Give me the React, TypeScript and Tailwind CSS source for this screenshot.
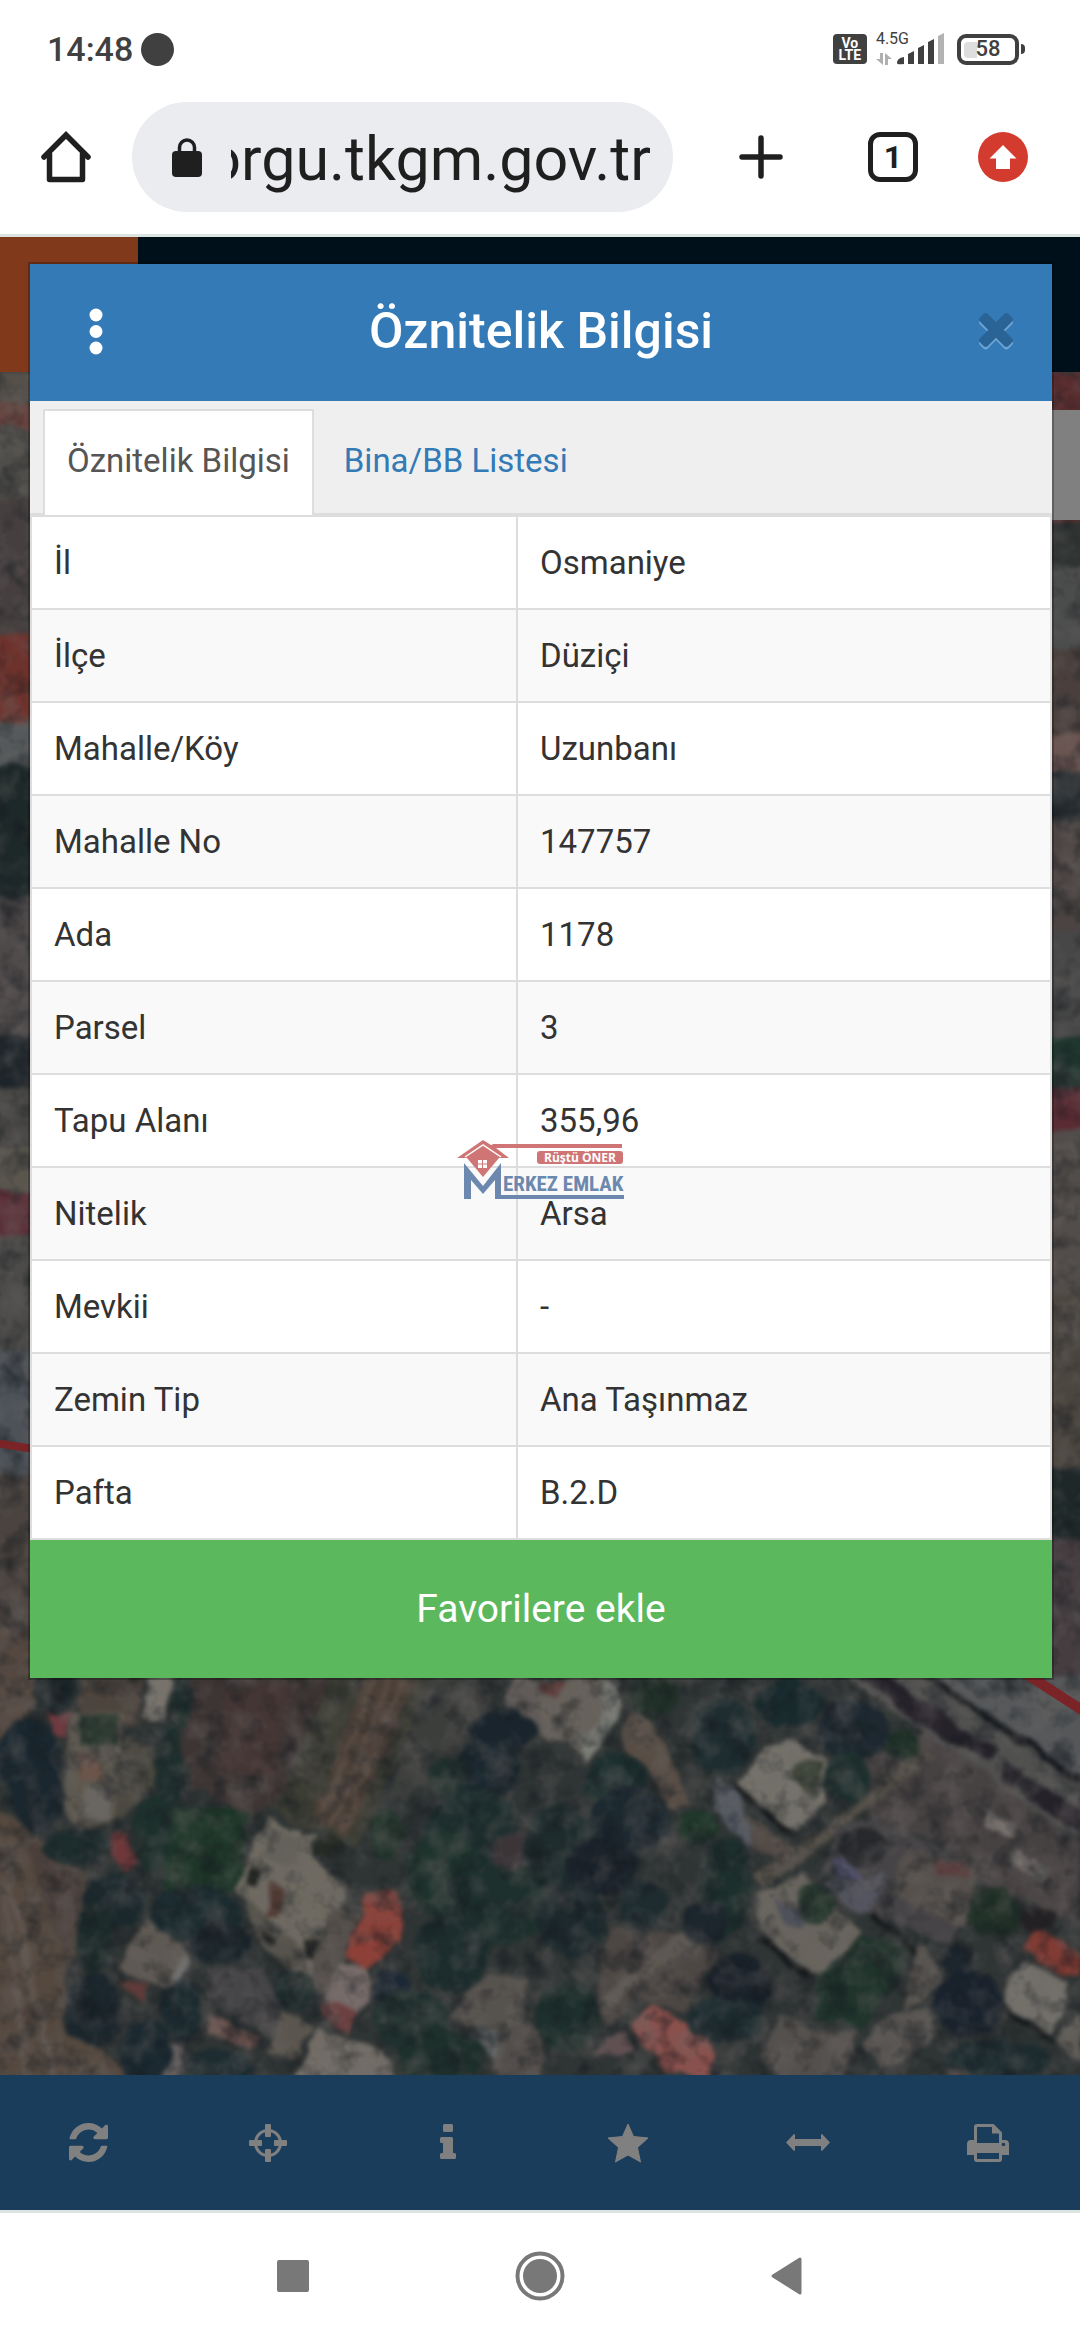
import { useEffect, useRef } from "react";

type Shape = [fill: string, points: string];
type Blob = [fill: string, cx: number, cy: number, rx: number, ry: number];
type Band = [fill: string, from: number, to: number];

const ROWS = [
  ["İl", "Osmaniye"],
  ["İlçe", "Düziçi"],
  ["Mahalle/Köy", "Uzunbanı"],
  ["Mahalle No", "147757"],
  ["Ada", "1178"],
  ["Parsel", "3"],
  ["Tapu Alanı", "355,96"],
  ["Nitelik", "Arsa"],
  ["Mevkii", "-"],
  ["Zemin Tip", "Ana Taşınmaz"],
  ["Pafta", "B.2.D"],
];

/* ---------- aerial map ---------- */

const LEFT_BANDS: Band[] = [
  ["#55504a", 0, 32],
  ["#66403b", 32, 56],
  ["#504e4a", 56, 125],
  ["#463f3f", 125, 265],
  ["#6e322c", 265, 350],
  ["#54585a", 350, 392],
  ["#1d2829", 392, 525],
  ["#4f4a4a", 525, 665],
  ["#1f262b", 665, 715],
  ["#454442", 715, 775],
  ["#5a564e", 775, 820],
  ["#5c2f38", 820, 862],
  ["#4b4a48", 862, 980],
  ["#4d5258", 980, 1102],
  ["#4a433f", 1102, 1320],
];

const RIGHT_BANDS: Band[] = [
  ["#5a2d2f", 0, 150],
  ["#2f3332", 150, 195],
  ["#4b4c4c", 195, 275],
  ["#4a3f3c", 275, 360],
  ["#6a5450", 360, 400],
  ["#2a3034", 400, 450],
  ["#4b4442", 450, 560],
  ["#474747", 560, 665],
  ["#1f352e", 665, 715],
  ["#5a2b33", 715, 758],
  ["#524d4a", 758, 923],
  ["#4c4640", 923, 1095],
  ["#1e2828", 1095, 1165],
  ["#453d40", 1165, 1320],
];

const WEST_SHAPES: Shape[] = [
  // ploughed field on the left edge
  ["#544841", "-20,-100 110,-100 105,130 0,240 -20,240"],
  ["#54483f", "-20,440 60,500 250,640 235,860 190,950 180,1060 380,1260 -20,1260"],
  ["#60564f", "0,590 20,590 170,1260 150,1260"],
  ["#5e534c", "0,660 12,660 90,1260 70,1260"],
  ["#4a3f3b", "60,520 240,650 220,840 190,900"],
  // yard and house top left
  ["#4d443d", "235,50 415,50 400,200 235,160"],
  ["#77736c", "430,50 510,50 480,185 415,180"],
  ["#5d584f", "205,160 360,170 330,480 230,520 185,450 190,270"],
  ["#2c3a31", "225,165 345,175 335,260 235,250"],
  ["#6b5449", "210,280 290,300 300,350 240,360"],
  ["#696661", "245,380 320,380 310,480 250,480"],
  ["#4a4840", "365,230 440,260 445,370 350,480 330,470"],
  ["#6f3a40", "140,155 205,155 190,225 155,225"],
  // bare ground and orchard rows
  ["#3d3534", "560,40 960,40 900,260 800,440 700,460 560,380 530,260"],
  ["#443634", "650,100 850,80 800,360 640,340"],
  ["#3c3d34", "960,50 1260,50 1040,560 860,500 800,440"],
  ["#4b3f38", "1060,50 1210,50 1010,540 910,480"],
  ["#584b41", "1080,50 1095,50 935,490 920,480"],
  ["#584b41", "1125,50 1140,50 965,515 950,505"],
  ["#584b41", "1165,50 1180,50 1000,535 985,525"],
  ["#3c3e3c", "1240,50 1460,50 1330,280 1180,420 1130,400"],
  ["#605b58", "1500,50 1600,50 1600,240 1460,150"],
  ["#1e3629", "480,430 720,450 700,680 560,720 480,680"],
  // large house in the centre
  ["#6e6a61", "775,470 915,535 920,600 1010,690 890,1000 780,800 685,680"],
  ["#64615a", "790,500 880,540 860,620 760,590"],
  ["#56534c", "700,700 860,850 900,930 840,940 750,840"],
  ["#513a34", "790,670 830,680 805,775 765,765"],
  ["#252722", "725,620 760,640 745,680 715,665"],
  ["#252722", "890,835 930,840 920,900 895,890"],
  ["#20221f", "770,800 800,830 790,850 765,840"],
  ["#544f4a", "960,740 1040,760 960,1010 890,980"],
  // red roofs
  ["#8c4038", "1060,690 1150,700 1175,790 1140,880 1060,940 1000,890 1040,780"],
  ["#766b69", "990,905 1060,935 1075,1020 1040,1070 940,1030"],
  ["#6c4040", "930,1030 1045,1060 1010,1120 930,1060"],
  ["#6e383a", "320,530 370,520 410,600 370,640 320,590"],
  // lower houses
  ["#5e5953", "425,770 520,850 550,900 500,990 340,930"],
  ["#737574", "530,890 555,910 510,990 495,970"],
  ["#5f3b39", "350,955 430,970 410,1030 370,1000"],
  ["#454446", "600,920 760,930 820,1040 790,1130 600,1020"],
  ["#6f544f", "610,1060 740,1120 730,1170 600,1120"],
  ["#5a554e", "820,1050 910,1100 850,1200 770,1180"],
  ["#726d66", "920,1100 1110,1170 1140,1260 850,1260"],
  ["#625b5d", "480,1140 530,1150 520,1260 470,1260"],
  ["#56524e", "1440,940 1530,960 1500,1240 1430,1240 1440,1120 1310,1080 1350,1000"],
  ["#626667", "1390,1110 1450,1120 1440,1190 1380,1170"],
  ["#524d4a", "1490,1080 1568,1100 1568,1260 1440,1260"],
];

const WEST_TREES: Blob[] = [
  ["#1c2629", 160, 100, 60, 60],
  ["#1a272f", 80, 290, 95, 115],
  ["#1b272e", 110, 420, 75, 100],
  ["#1d2c2d", 220, 560, 100, 50],
  ["#1f2f2d", 490, 330, 45, 150],
  ["#1d302c", 440, 520, 60, 110],
  ["#1b292d", 330, 720, 90, 80],
  ["#1c2c30", 570, 760, 130, 85],
  ["#1b262c", 640, 850, 90, 60],
  ["#1d2c2b", 275, 830, 55, 110],
  ["#1b262d", 270, 1050, 80, 110],
  ["#1c2b30", 530, 1050, 60, 90],
  ["#1b2930", 420, 1170, 80, 90],
  ["#1c2c30", 640, 1220, 100, 50],
  ["#1e2c2c", 850, 990, 55, 60],
  ["#1f302d", 530, 110, 25, 90],
  ["#19242d", 1460, 210, 95, 65],
  ["#1b282f", 1410, 330, 100, 90],
  ["#20302d", 1300, 350, 60, 60],
  ["#1e2f2e", 1370, 500, 130, 110],
  ["#1f332d", 1290, 640, 110, 130],
  ["#1e302d", 1440, 720, 150, 140],
  ["#1d2d2d", 1310, 880, 110, 120],
  ["#1c2834", 1130, 980, 50, 55],
  ["#1f312e", 1190, 1080, 110, 90],
  ["#1e302c", 1280, 1190, 130, 80],
  ["#20332a", 1120, 520, 50, 80],
  ["#262b26", 950, 560, 40, 30],
  ["#3b3538", 1490, 570, 70, 60],
];

const EAST_SHAPES: Shape[] = [
  ["#474242", "950,300 1160,200 1330,330 1568,540 1568,800 1300,680 1180,560 960,470"],
  // main road with its hedges
  ["#50504f", "880,50 1130,50 1568,360 1568,550 1340,370 1100,200"],
  ["#26222a", "930,50 1000,50 1330,270 1290,300 1100,190"],
  ["#16181d", "1110,50 1135,50 1568,350 1568,372"],
  ["#555759", "1145,50 1600,50 1600,370"],
  ["#26222a", "1350,310 1568,450 1568,520 1340,360"],
  // house on the top left
  ["#66615a", "60,60 235,60 210,220 130,310 90,250 0,220 0,110"],
  ["#7a7c76", "195,70 235,70 210,220 130,310 110,240 170,200"],
  ["#5d3835", "0,60 70,60 45,115 0,90"],
  ["#574d45", "260,150 310,170 400,330 430,440 380,450 310,320 240,260"],
  // white house with the courtyard
  ["#74716a", "710,225 770,260 830,300 830,420 740,525 570,370 640,290"],
  ["#3f463a", "740,310 820,300 810,410 770,400 730,350"],
  ["#555962", "520,360 580,400 620,560 590,560 500,440"],
  ["#504843", "600,460 740,560 700,600 620,560"],
  ["#17191b", "565,365 735,520 725,530 560,380"],
  // lane
  ["#555049", "1110,260 1150,290 640,690 620,650 840,500"],
  ["#464446", "860,500 980,470 1240,610 1200,860 960,760 820,640"],
  ["#4c4c68", "840,600 910,600 950,680 870,690"],
  ["#53545e", "830,680 1000,640 990,720 930,760"],
  ["#55504c", "1060,560 1280,640 1220,800 1020,700"],
  ["#5c4040", "1130,600 1230,610 1250,650 1150,650"],
  // cars
  ["#77716e", "1300,455 1380,500 1360,535 1285,495"],
  ["#77716e", "1375,555 1475,630 1450,670 1360,600"],
  // middle house
  ["#68645d", "630,700 770,640 880,760 930,820 850,950 790,940 640,810"],
  ["#4e505a", "680,710 780,760 770,810 720,800"],
  ["#15181a", "640,820 800,960 790,975 630,840"],
  ["#15181a", "965,750 1110,880 1110,900 955,770"],
  ["#20342c", "930,830 1060,860 1050,930 950,1110 800,1080 800,960"],
  ["#57534f", "1110,850 1150,900 1180,960 1060,1060 1060,980"],
  // roofs on the right
  ["#803b34", "1430,810 1568,880 1568,950 1500,940 1400,870"],
  ["#73706a", "1400,900 1540,970 1530,1060 1480,1120 1340,1030"],
  ["#15181a", "1340,1035 1500,1140 1490,1150 1335,1050"],
  ["#605c57", "1500,1130 1568,1060 1568,1200 1520,1170"],
  // bottom
  ["#4d4744", "200,800 400,820 520,880 420,1060 300,1030 200,1090 160,1040"],
  ["#5e5852", "410,810 440,850 180,1060 170,1030"],
  ["#8a504c", "330,1040 460,1110 510,1180 500,1260 350,1230 260,1090"],
  ["#605052", "190,1130 250,1110 280,1180 160,1190"],
  ["#54504d", "700,1060 850,1130 930,1110 880,1260 700,1260 640,1180"],
  ["#575451", "980,1080 1130,1040 1140,1140 1000,1230 940,1170"],
  ["#504643", "1190,1170 1270,1180 1270,1260 1180,1260"],
];

const EAST_TREES: Blob[] = [
  ["#213029", 330, 110, 75, 65],
  ["#1e2d30", 530, 230, 95, 115],
  ["#192b2e", 720, 130, 100, 70],
  ["#1d2830", 910, 210, 100, 95],
  ["#1e302e", 890, 350, 65, 80],
  ["#203229", 1050, 250, 50, 50],
  ["#1d302f", 220, 360, 90, 80],
  ["#1d2930", 260, 480, 120, 95],
  ["#1e2c2d", 60, 560, 110, 120],
  ["#1b232b", 180, 620, 100, 85],
  ["#1d2a2d", 90, 780, 100, 110],
  ["#1e2c30", 300, 730, 75, 75],
  ["#1f382b", 460, 500, 55, 45],
  ["#1d2f2c", 540, 680, 75, 145],
  ["#1c262d", 480, 790, 70, 65],
  ["#19212a", 580, 980, 95, 95],
  ["#1c2b2f", 540, 1080, 115, 65],
  ["#1e302d", 80, 1070, 90, 105],
  ["#22352b", 800, 735, 55, 55],
  ["#26282c", 940, 560, 80, 60],
  ["#223229", 1320, 760, 80, 70],
  ["#1d262d", 1210, 900, 45, 45],
  ["#1a232d", 1240, 1030, 100, 100],
  ["#1d2c2f", 1330, 1200, 160, 55],
  ["#242124", 1450, 780, 55, 35],
];

function Bands({ x, bands }: { x: number; bands: Band[] }) {
  return (
    <>
      {bands.map(([fill, from, to]) => (
        <rect key={from} x={x} y={from} width="60" height={to - from} fill={fill} />
      ))}
    </>
  );
}

function Tile({ x, shapes, trees }: { x: number; shapes: Shape[]; trees: Blob[] }) {
  return (
    <g transform={`translate(${x} 1288) scale(0.3444 0.3333)`}>
      {shapes.map(([fill, points]) => (
        <polygon key={points} fill={fill} points={points} />
      ))}
      {trees.map(([fill, cx, cy, rx, ry]) => (
        <ellipse key={`${cx}-${cy}`} fill={fill} cx={cx} cy={cy} rx={rx} ry={ry} />
      ))}
    </g>
  );
}

function AerialMap() {
  return (
    <svg
      className="absolute inset-0 h-full w-full"
      viewBox="0 0 1080 1703"
      preserveAspectRatio="xMidYMax slice"
      aria-hidden="true"
    >
      <defs>
        <filter id="rough" x="0" y="0" width="1" height="1" colorInterpolationFilters="sRGB">
          <feTurbulence type="fractalNoise" baseFrequency="0.04" numOctaves="2" seed="4" result="n" />
          <feDisplacementMap in="SourceGraphic" in2="n" scale="14" xChannelSelector="R" yChannelSelector="G" />
          <feGaussianBlur stdDeviation="2" />
        </filter>
        <filter id="grain" x="0" y="0" width="1" height="1" colorInterpolationFilters="sRGB">
          <feTurbulence type="fractalNoise" baseFrequency="0.035" numOctaves="3" seed="9" />
          <feColorMatrix values="0 0 0 0 0.42  0 0 0 0 0.4  0 0 0 0 0.39  1 0 0 0 -0.42" />
        </filter>
        <filter id="shade" x="0" y="0" width="1" height="1" colorInterpolationFilters="sRGB">
          <feTurbulence type="fractalNoise" baseFrequency="0.04" numOctaves="3" seed="21" />
          <feColorMatrix values="0 0 0 0 0.07  0 0 0 0 0.09  0 0 0 0 0.11  1.3 0 0 0 -0.6" />
        </filter>
      </defs>
      <g filter="url(#rough)">
        <rect x="-30" y="-30" width="1140" height="1763" fill="#35373a" />
        <rect x="-30" y="1280" width="1140" height="453" fill="#2f3434" />
        <Bands x={-20} bands={LEFT_BANDS} />
        <Bands x={1040} bands={RIGHT_BANDS} />
        <Tile x={0} shapes={WEST_SHAPES} trees={WEST_TREES} />
        <Tile x={540} shapes={EAST_SHAPES} trees={EAST_TREES} />
      </g>
      <rect width="1080" height="1703" filter="url(#grain)" />
      <rect width="1080" height="1703" filter="url(#shade)" />
      <path d="M-5 1071L60 1081" stroke="#7b2428" strokeWidth="8" />
      <path d="M1020 1298L1085 1340" stroke="#7b2428" strokeWidth="10" />
    </svg>
  );
}

/* ---------- phone chrome ---------- */

function StatusBar() {
  return (
    <div className="flex h-[102px] items-center justify-between pr-[55px] pb-1 pl-[47px] text-[#404040]">
      <div className="flex items-center gap-2">
        <span className="text-[34px] leading-10 font-medium">14:48</span>
        <span className="h-[33px] w-[33px] rounded-full bg-[#404040]" />
      </div>
      <div className="flex items-center">
        <div className="mr-[9px] flex h-[30px] w-[34px] flex-col items-center justify-center rounded bg-[#404040] text-sm leading-3 font-bold text-white">
          <span>Vo</span>
          <span>LTE</span>
        </div>
        <div className="flex h-8 flex-col justify-between">
          <span className="text-base leading-3">4.5G</span>
          <svg width="16" height="12" viewBox="0 0 16 12" fill="#b0b0b0" aria-hidden="true">
            <path d="M4 0h3v12L0 6h4zM9 0l7 6h-4v6H9z" />
          </svg>
        </div>
        <svg className="-ml-3 mr-3" width="48" height="32" viewBox="0 0 48 32" fill="#404040" aria-hidden="true">
          <path d="M0 30q0-5 7-6v7q-7 1-7-1zM11 21l6-3v13h-6zM21 15l6-3v19h-6zM31 9l6-3v25h-6z" />
          <path d="M41 3l6-3v31h-6z" fill="#b3b3b3" />
        </svg>
        <div className="relative flex h-[31px] w-[62px] items-center justify-center rounded-[9px] border-4 border-[#404040]">
          <span className="absolute top-1 left-[3px] h-4 w-[13px] rounded-l bg-[#dedede]" />
          <span className="relative text-[22px] leading-6 font-medium">58</span>
        </div>
        <span className="ml-[2px] h-[10px] w-1 rounded-r bg-[#404040]" />
      </div>
    </div>
  );
}

function BrowserBar() {
  const urlRef = useRef<HTMLInputElement>(null);

  // keep the end of the address in view
  useEffect(() => {
    if (urlRef.current) urlRef.current.scrollLeft = urlRef.current.scrollWidth;
  }, []);

  return (
    <div className="flex items-center border-b-[3px] border-[#dce4e1] pr-[52px] pb-[22px] pl-[41px] text-[#1f1f1f]">
      <button type="button" aria-label="Ana sayfa">
        <svg width="50" height="52" viewBox="0 0 50 52" fill="none" stroke="currentColor" strokeWidth="5.5" strokeLinecap="round" strokeLinejoin="round">
          <path d="M3 26L25 4L47 26" strokeLinejoin="miter" />
          <path d="M8.5 23V48.5H41.5V23" />
        </svg>
      </button>
      <div className="ml-[41px] flex h-[110px] min-w-0 flex-1 items-center rounded-full bg-[#ebecf0] pr-[22px] pl-10">
        <svg className="shrink-0" width="30" height="39" viewBox="0 0 30 39" aria-hidden="true">
          <rect y="13" width="30" height="26" rx="4" fill="currentColor" />
          <path d="M7.5 15V9.5a7.5 7.5 0 0 1 15 0V15" fill="none" stroke="currentColor" strokeWidth="3.5" />
        </svg>
        <input
          ref={urlRef}
          aria-label="Adres"
          readOnly
          defaultValue="parselsorgu.tkgm.gov.tr"
          className="ml-[29px] h-[84px] w-full min-w-0 flex-1 bg-transparent pt-1 text-[61px] leading-[80px] outline-none"
        />
      </div>
      <button type="button" aria-label="Yeni sekme" className="ml-[66px]">
        <svg width="44" height="44" viewBox="0 0 44 44" stroke="currentColor" strokeWidth="5.5" strokeLinecap="round">
          <path d="M22 3V41M3 22H41" />
        </svg>
      </button>
      <button
        type="button"
        aria-label="Sekmeler"
        className="ml-[85px] flex h-[50px] w-[50px] items-center justify-center rounded-xl border-[5px] border-[#1f1f1f] text-[32px] leading-10 font-bold"
      >
        1
      </button>
      <button type="button" aria-label="Güncelle" className="ml-[60px]">
        <svg width="50" height="50" viewBox="0 0 50 50">
          <circle cx="25" cy="25" r="25" fill="#d33b2f" />
          <path d="M25 13L38.5 26.5H32V37H18V26.5H11.5Z" fill="#fff" />
        </svg>
      </button>
    </div>
  );
}

function NavBar() {
  return (
    <div className="flex h-[130px] items-center justify-center gap-[206px] border-t-[3px] border-[#dde5e1] bg-white pb-[2px] text-[#787878]">
      <button type="button" aria-label="Son uygulamalar">
        <svg width="32" height="32" viewBox="0 0 32 32" fill="currentColor">
          <rect width="32" height="32" rx="2" />
        </svg>
      </button>
      <button type="button" aria-label="Giriş">
        <svg width="50" height="50" viewBox="0 0 50 50" fill="currentColor">
          <circle cx="25" cy="25" r="17" />
          <circle cx="25" cy="25" r="22.5" fill="none" stroke="currentColor" strokeWidth="4" />
        </svg>
      </button>
      <button type="button" aria-label="Geri">
        <svg width="32" height="38" viewBox="0 0 32 38" fill="currentColor" stroke="currentColor" strokeWidth="3" strokeLinejoin="round">
          <path d="M2 19L29 2V36Z" />
        </svg>
      </button>
    </div>
  );
}

/* ---------- map page ---------- */

const TOOLS = [
  {
    label: "Yenile",
    icon: (
      <svg width="39" height="39" viewBox="0 0 1536 1536" fill="currentColor">
        <path d="M1511 928q0 5-1 7-64 268-268 434.500t-478 166.500q-146 0-282.500-55t-243.500-157l-129 129q-19 19-45 19t-45-19-19-45v-448q0-26 19-45t45-19h448q26 0 45 19t19 45-19 45l-137 137q71 66 161 102t187 36q134 0 250-65t186-179q11-17 53-117 8-23 30-23h192q13 0 22.500 9.500t9.500 22.500zm25-800v448q0 26-19 45t-45 19h-448q-26 0-45-19t-19-45 19-45l138-138q-148-137-349-137-134 0-250 65t-186 179q-11 17-53 117-8 23-30 23h-199q-13 0-22.500-9.500t-9.500-22.500v-7q65-268 270-434.500t480-166.500q146 0 284 55.500t245 156.500l130-129q19-19 45-19t45 19 19 45z" />
      </svg>
    ),
  },
  {
    label: "Konumum",
    icon: (
      <svg width="38" height="38" viewBox="0 0 38 38" fill="currentColor">
        <circle cx="19" cy="19" r="12.5" fill="none" stroke="currentColor" strokeWidth="3" />
        <path d="M16 1q0-1 1-1h4q1 0 1 1v11q0 1-1 1h-4q-1 0-1-1zM16 26q0-1 1-1h4q1 0 1 1v11q0 1-1 1h-4q-1 0-1-1zM1 22q-1 0-1-1v-4q0-1 1-1h11q1 0 1 1v4q0 1-1 1zM26 22q-1 0-1-1v-4q0-1 1-1h11q1 0 1 1v4q0 1-1 1z" />
      </svg>
    ),
  },
  {
    label: "Bilgi",
    icon: (
      <svg width="16" height="37" viewBox="0 0 16 37" fill="currentColor">
        <rect x="3" y="0" width="10" height="8" rx="1.5" />
        <path d="M1.5 13H11.5Q13 13 13 14.5V29H14.5Q16 29 16 30.5V33.5Q16 35 14.5 35H1.5Q0 35 0 33.5V30.5Q0 29 1.5 29H3V19H1.5Q0 19 0 17.5V14.5Q0 13 1.5 13Z" />
      </svg>
    ),
  },
  {
    label: "Favoriler",
    icon: (
      <svg width="42" height="42" viewBox="0 0 42 42" fill="currentColor" stroke="currentColor" strokeLinejoin="round">
        <path d="M21 2L26.5 14.5L41 16L30.5 25.5L33.5 40L21 33L8.5 40L11.5 25.5L1 16L15.5 14.5Z" />
      </svg>
    ),
  },
  {
    label: "Ölçüm",
    icon: (
      <svg width="44" height="17" viewBox="0 0 44 17" fill="currentColor">
        <path d="M0 8.5L7 1Q9 -1 9 1.5V5H35V1.5Q35 -1 37 1L44 8.5L37 16Q35 18 35 15.5V12H9V15.5Q9 18 7 16Z" />
      </svg>
    ),
  },
  {
    label: "Yazdır",
    icon: (
      <svg width="42" height="38" viewBox="0 0 42 38" fill="none" stroke="currentColor" strokeWidth="3">
        <path d="M8.5 20V3Q8.5 1.5 10 1.5H26L33.5 9V20" />
        <path d="M25 1.5V9.5H33.5L26 1.5Z" fill="currentColor" stroke="none" />
        <path d="M0 31V20Q0 16 4 16H7V19H35V16H38Q42 16 42 20V31H35V27H7V31Z" fill="currentColor" stroke="none" />
        <path d="M8.5 27.5H33.5V35Q33.5 36.5 32 36.5H10Q8.5 36.5 8.5 35Z" />
        <circle cx="36.5" cy="20.5" r="1.8" fill="#1b3d5c" stroke="none" />
      </svg>
    ),
  },
];

function MapPage() {
  return (
    <div className="col-start-1 row-start-1 flex flex-col">
      <div className="flex h-[135px] bg-[#00101b]">
        <div className="w-[138px] bg-[#80391b]" />
      </div>
      <div className="relative flex-1 overflow-hidden bg-[#353739]">
        <AerialMap />
        <div className="absolute top-[38px] right-0 h-[110px] w-10 bg-[#808080]" />
      </div>
      <div className="grid h-[135px] grid-cols-6 bg-[#1b3d5c] text-[#808080]">
        {TOOLS.map((tool) => (
          <button key={tool.label} type="button" aria-label={tool.label} className="flex items-center justify-center pr-1">
            {tool.icon}
          </button>
        ))}
      </div>
    </div>
  );
}

/* ---------- attribute dialog ---------- */

function AgencyLogo() {
  return (
    <svg
      className="pointer-events-none absolute top-[876px] left-[427px]"
      width="170"
      height="60"
      viewBox="0 0 170 60"
      role="img"
      aria-label="Rüştü Öner Merkez Emlak"
    >
      <path d="M35 4H165V8H38Z" fill="#cf7575" />
      <path d="M0 18L26 0L34 5H39V8L52 18H42L26 37L10 18Z" fill="#cf7575" />
      <path d="M8 17L26 5L44 17" fill="none" stroke="#fff" strokeWidth="1.5" />
      <path d="M21 20h4v3.5h-4zM26 20h4v3.5h-4zM21 24.5h4v3.5h-4zM26 24.5h4v3.5h-4z" fill="#fff" />
      <path d="M7 23L26 46L44 23V55H167V59H38V40L26 54L14 40V59H7Z" fill="#6c88ae" />
      <rect x="80" y="11" width="86" height="13" rx="3" fill="#cf7575" />
      <text x="123" y="22" textAnchor="middle" fontSize="12" fontWeight="700" fill="#fff" fontFamily="'Open Sans', sans-serif">
        Rüştü ÖNER
      </text>
      <text x="46" y="51" fontSize="21" fontWeight="700" fill="#6c88ae" fontFamily="'Liberation Sans Narrow', 'Roboto Condensed', Roboto, sans-serif">
        ERKEZ EMLAK
      </text>
    </svg>
  );
}

const CLOSE_PATH =
  "M1490 1322q0 40-28 68l-136 136q-28 28-68 28t-68-28l-294-294-294 294q-28 28-68 28t-68-28l-136-136q-28-28-28-68t28-68l294-294-294-294q-28-28-28-68t28-68l136-136q28-28 68-28t68 28l294 294 294-294q28-28 68-28t68 28l136 136q28 28 28 68t-28 68l-294 294 294 294q28 28 28 68z";

function AttributeDialog() {
  return (
    <div className="z-10 col-start-1 row-start-1 self-start pt-[27px] pr-7 pl-[30px]">
      <div role="dialog" aria-labelledby="dialog-title" className="relative bg-white shadow-[0_0_0_2px_rgba(0,0,0,0.25)]">
        <div className="flex h-[137px] items-center justify-between bg-[#337ab7] pr-[39px] pb-[3px] pl-[59px] text-white">
          <button type="button" aria-label="Menü">
            <svg width="14" height="47" viewBox="0 0 14 47" fill="currentColor">
              <circle cx="7" cy="7" r="6.5" />
              <circle cx="7" cy="23.5" r="6.5" />
              <circle cx="7" cy="40" r="6.5" />
            </svg>
          </button>
          <h1 id="dialog-title" className="text-[50px] leading-[60px] font-medium">
            Öznitelik Bilgisi
          </h1>
          <button type="button" aria-label="Kapat">
            <svg width="34" height="37" viewBox="302 366 1188 1293">
              <path fill="#6ea4d3" transform="translate(0 90)" d={CLOSE_PATH} />
              <path fill="#2a6496" d={CLOSE_PATH} />
            </svg>
          </button>
        </div>

        <div role="tablist" className="flex border-b-2 border-[#ddd] bg-[#efefef] pt-2 pl-[13px] text-[33px] leading-[46px]">
          <button
            type="button"
            role="tab"
            aria-selected="true"
            className="-mb-[2px] h-[106px] border-2 border-b-0 border-[#ddd] bg-white px-[22px] pb-1 text-[#555]"
          >
            Öznitelik Bilgisi
          </button>
          <button type="button" role="tab" aria-selected="false" className="h-[104px] px-[30px] text-[#337ab7]">
            Bina/BB Listesi
          </button>
        </div>

        <table className="w-full border-collapse text-[33px] leading-[46px] text-[#333]">
          <tbody>
            {ROWS.map(([name, value]) => (
              <tr key={name} className="h-[93px] odd:bg-white even:bg-[#f9f9f9]">
                <th scope="row" className="w-[486px] border-2 border-[#ddd] px-[22px] text-left font-normal">
                  {name}
                </th>
                <td className="border-2 border-[#ddd] px-[22px]">{value}</td>
              </tr>
            ))}
          </tbody>
        </table>

        <button type="button" className="block h-[138px] w-full bg-[#5cb85c] text-[39px] leading-[54px] text-white">
          Favorilere ekle
        </button>

        <AgencyLogo />
      </div>
    </div>
  );
}

export default function App() {
  return (
    <div className="flex min-h-screen flex-col overflow-hidden bg-white font-[Roboto,sans-serif]">
      <StatusBar />
      <BrowserBar />
      <main className="grid flex-1 grid-cols-1">
        <MapPage />
        <AttributeDialog />
      </main>
      <NavBar />
    </div>
  );
}
